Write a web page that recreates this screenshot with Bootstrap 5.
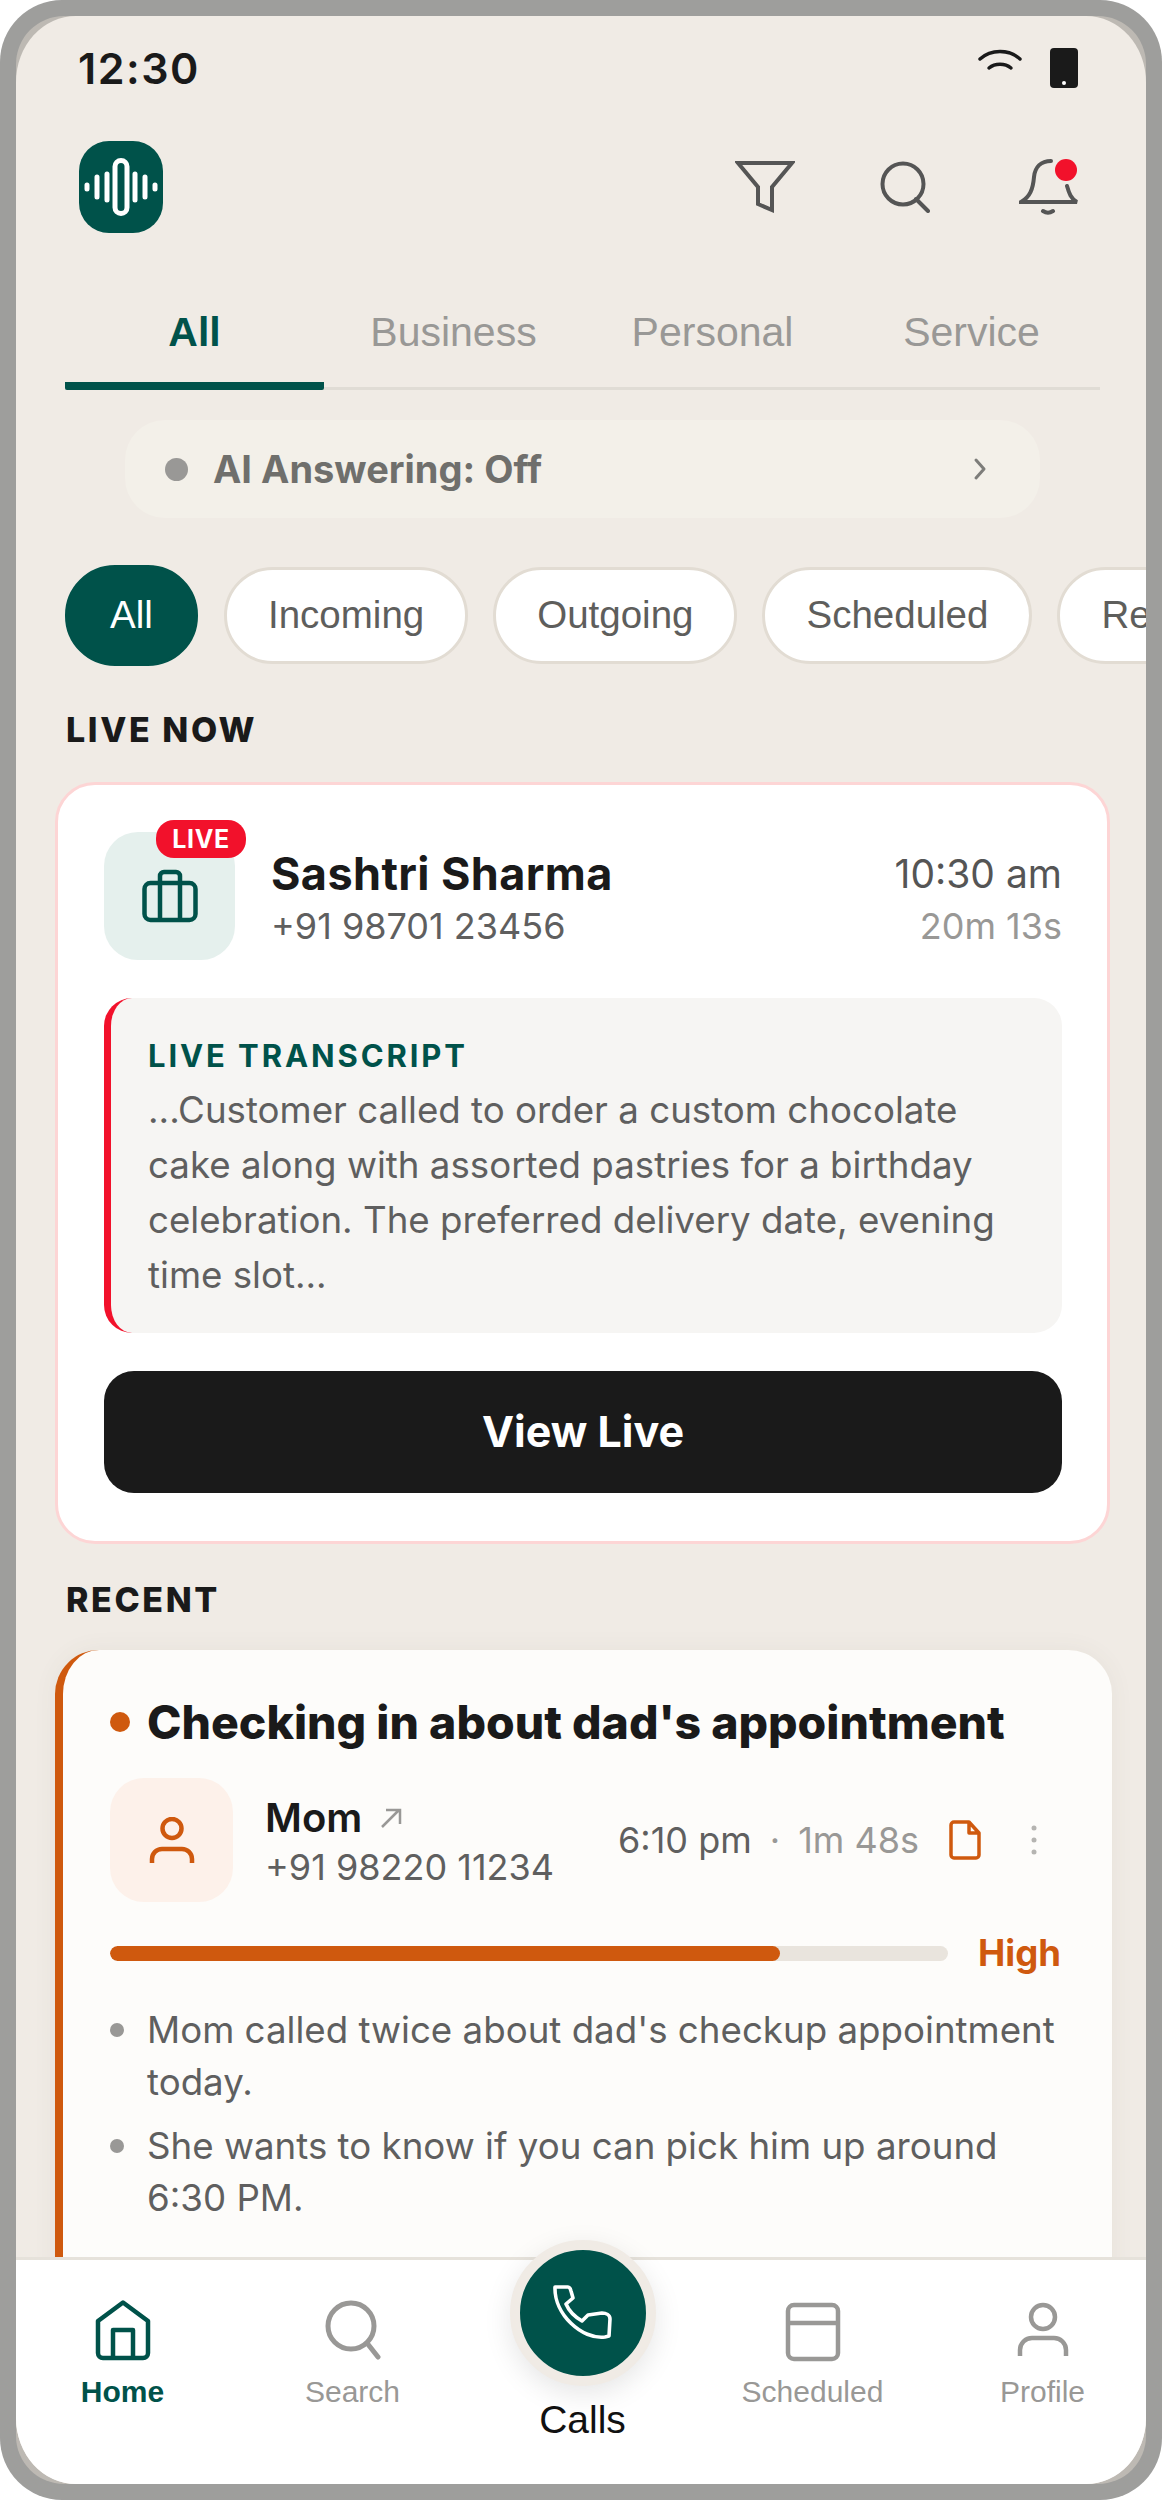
<!DOCTYPE html>
<html lang="en">
<head>
  <meta charset="UTF-8">
  <title>Calls Home</title>
  <meta name="viewport" content="width=device-width, initial-scale=1" />
  <link href="https://cdn.jsdelivr.net/npm/bootstrap@5.3.3/dist/css/bootstrap.min.css" rel="stylesheet">
  <style>
    body { margin: 0; background: #fff; font-family: Inter, sans-serif; color: #1a1a1a; }
    svg { display: block; }

    .phone-frame { width: 1162px; height: 2500px; padding: 16px; background: #9e9e9c; border-radius: 62px; }
    .frame-edge { height: 100%; background: #bdb9b3; border-radius: 48px; }
    .screen { height: 100%; background: #f0ebe5; border-radius: 60px / 66px; overflow: hidden; display: flex; flex-direction: column; }
    .screen-body { flex: 1 1 0; min-height: 0; overflow: hidden; }

    .status-row { height: 125px; padding: 32px 68px 0 62px; align-items: flex-start; }
    .status-time { font-size: 43px; font-weight: 600; line-height: 40px; letter-spacing: 1.5px; }
    .status-icons { gap: 28px; }

    .top-row { padding: 0 67px 0 63px; height: 92px; }
    .app-logo { width: 84px; height: 92px; background: #00524a; border-radius: 30px; }
    .top-search { margin-left: 85px; }
    .top-bell { margin-left: 89px; }

    .tab-row { margin: 76px 46px 0 49px; border-bottom: 3px solid #e0dcd5; }
    .tab-item { flex: 0 0 259px; height: 73px; margin-bottom: -3px; text-align: center; color: #999896; font: 400 41px/46px "Liberation Sans", sans-serif; }
    .tab-item.active-tab { color: #00524a; font-weight: 700; border-bottom: 8px solid #00524a; border-radius: 2px; height: 81px; }

    .ai-pill { margin: 30px 106px 0 109px; height: 98px; padding: 0 53px 0 40px; background: #f3f0e9; border-radius: 40px; color: #6f6f6c; font-size: 38px; font-weight: 700; }
    .grey-dot { width: 23px; height: 23px; border-radius: 50%; background: #999896; margin-right: 25px; }

    .chip-row { margin: 47px 0 0 49px; gap: 25px; white-space: nowrap; }
    .chip-item { height: 97px; padding: 0 41px; background: #fff; border: 3px solid #e2dcd3; border-radius: 50px; color: #5e5e5c; font: 400 38.500px/1 "Liberation Sans", sans-serif; flex: none; }
    .chip-item.active-chip { height: 101px; width: 133px; margin-right: 1px; padding: 0; background: #00524a; border-color: #00524a; color: #fff; }

    .section-label { margin: 0; padding-left: 50px; font-size: 34px; font-weight: 800; letter-spacing: 2.600px; line-height: 40px; color: #1a1a1a; }
    .label-live { margin-top: 44px; }
    .label-recent { margin-top: 36px; }

    .live-box { margin: 32px 36px 0 39px; height: 762px; padding: 47px 45px 0 46px; border: 3px solid #fdd5d5; border-radius: 40px; background: #fff; }
    .tile-wrap { position: relative; flex: none; width: 131px; height: 128px; margin-right: 36px; }
    .icon-tile { width: 131px; height: 128px; border-radius: 34px; background: #e5f0ed; }
    .live-tag { position: absolute; left: 52px; top: -12px; width: 90px; height: 38px; border-radius: 18px; background: #f2112b; color: #fff; font-size: 25px; font-weight: 700; letter-spacing: .6px; padding: 0; line-height: 38px; }
    .live-name { font-size: 45px; font-weight: 700; line-height: 52px; letter-spacing: .4px; padding-top: 3px; }
    .live-phone { font-size: 36px; line-height: 44px; margin-top: 4px; color: #5f5f5f; }
    .live-time { font-size: 39px; line-height: 52px; color: #555; padding-top: 3px; }
    .live-dur { font-size: 36px; line-height: 44px; margin-top: 4px; color: #999896; }

    .transcript-box { margin-top: 38px; height: 335px; padding: 38px 40px 0 37px; background: #f6f5f3; border-left: 7px solid #f2112b; border-radius: 28px; }
    .transcript-title { font-size: 31px; line-height: 40px; font-weight: 700; letter-spacing: 2.900px; color: #00524a; }
    .transcript-text { margin: 6px 0 0; font-size: 36.700px; line-height: 55px; color: #5f5f5f; }
    .view-btn { width: 100%; height: 122px; margin-top: 38px; padding-top: 4px; background: #1a1a1a; color: #fff; border: 0; border-radius: 30px; font-size: 43px; font-weight: 700; }

    .recent-box { margin: 30px 34px 0 39px; height: 800px; padding: 42px 51px 0 47px; background: #fdfcfa; border: 0; border-left: 8px solid #cf590e; border-radius: 44px 44px 0 0; box-shadow: 0 0 24px rgba(90,80,60,.06); }
    .recent-title { font-size: 46.400px; line-height: 60px; font-weight: 800; margin: 0; white-space: nowrap; }
    .orange-dot { flex: none; width: 20px; height: 20px; border-radius: 50%; background: #cf590e; margin-right: 17px; }
    .caller-row { margin-top: 26px; }
    .mom-tile { flex: none; width: 123px; height: 124px; margin-right: 32px; border-radius: 34px; background: #fdf1ea; }
    .mom-name { font-size: 40px; line-height: 48px; font-weight: 600; padding-top: 3px; }
    .mom-arrow { margin-left: 18px; }
    .mom-phone { font-size: 36px; line-height: 44px; margin-top: 3px; color: #5f5f5f; }
    .call-meta { margin-left: auto; margin-right: 24px; font-size: 36px; color: #999896; }
    .call-clock { color: #5f5f5f; }
    .meta-sep { margin: 0 18px; }
    .meta-doc { margin-left: 30px; }
    .meta-more { margin-left: 50px; }

    .priority-row { margin-top: 29px; }
    .priority-track { flex: 1 1 auto; height: 15px; background: #e9e4dd; border-radius: 8px; }
    .priority-track .progress-bar { background: #cf590e; border-radius: 8px; }
    .priority-text { margin-left: 30px; font-size: 36.500px; line-height: 44px; font-weight: 700; color: #cf590e; }

    .note-list { margin: 29px 0 0; padding: 0; list-style: none; font-size: 36.700px; line-height: 52px; color: #5f5f5f; }
    .note-list li { position: relative; padding-left: 37px; margin-bottom: 12px; }
    .note-list li::before { content: ""; position: absolute; left: 0; top: 19px; width: 14px; height: 14px; border-radius: 50%; background: #999896; }

    .bottom-nav { position: relative; flex: none; height: 227px; padding-left: 3px; background: #fff; border-top: 3px solid #e6e2db; display: grid; grid-template-columns: repeat(5, 230px); justify-content: center; }
    .nav-cell { padding-top: 40px; display: flex; flex-direction: column; align-items: center; color: #999896; font: 400 30px/36px "Liberation Sans", sans-serif; }
    .nav-cell svg { height: 62px; margin-bottom: 12px; }
    .nav-cell.home-cell { color: #00524a; font-weight: 700; }
    .nav-cell.calls-cell { padding-top: 138px; color: #111; font-size: 39px; line-height: 44px; }
    .calls-btn { position: absolute; left: 494px; top: -20px; width: 146px; height: 146px; padding: 0; border-radius: 50%; background: #00524a; border: 10px solid #f0ebe5; box-shadow: 0 8px 28px rgba(0,0,0,.1); }
  </style>
</head>
<body>
  <div class="phone-frame">
    <div class="frame-edge">
      <div class="screen">
        <div class="screen-body">

          <div class="status-row d-flex justify-content-between">
            <div class="status-time">12:30</div>
            <div class="status-icons d-flex">
              <svg width="44" height="24" viewBox="0 0 44 24" fill="none" stroke="#1a1a1a" stroke-width="3.500" stroke-linecap="round"><path d="M2 11C13 1 31 1 42 11"/><path d="M11 20c6-5 16-5 22 0"/></svg>
              <svg width="28" height="40" viewBox="0 0 28 40"><rect width="28" height="40" rx="4" fill="#1a1a1a"/><circle cx="14" cy="35" r="2" fill="#fff"/></svg>
            </div>
          </div>

          <div class="top-row d-flex justify-content-between align-items-center">
            <div class="app-logo d-flex align-items-center justify-content-center">
              <svg width="76" height="58" viewBox="0 0 76 58" fill="none" stroke="#fff" stroke-linecap="round">
                <path stroke-width="5" d="M4 27v4M14 19v20M24 16v26M52 16v26M62 19v20M72 27v4"/>
                <rect x="32" y="2.500" width="12" height="53" rx="6" stroke-width="5"/>
              </svg>
            </div>
            <div class="d-flex align-items-center">
              <svg width="60" height="52" viewBox="0 0 60 52" fill="none" stroke="#555" stroke-width="4"><path d="M3 2h54L37 26v23l-14-6V26z"/></svg>
              <svg class="top-search" width="50" height="52" viewBox="0 0 50 52" fill="none" stroke="#555" stroke-width="4" stroke-linecap="round"><circle cx="23" cy="23" r="20.500"/><path d="M36 38l12 12"/></svg>
              <svg class="top-bell" width="60" height="58" viewBox="0 0 60 58" fill="none"><path stroke="#555" stroke-width="4" stroke-linecap="round" d="M32 3C22 3 16 9 15 19c-1 12-4 20-13 25h56c-6-3-8-9-10-16M24 53c3 2 7 2 10 0"/><circle cx="47" cy="12" r="11" fill="#f2112b"/></svg>
            </div>
          </div>

          <nav class="tab-row d-flex">
            <div class="tab-item active-tab">All</div>
            <div class="tab-item">Business</div>
            <div class="tab-item">Personal</div>
            <div class="tab-item">Service</div>
          </nav>

          <div class="ai-pill d-flex align-items-center">
            <span class="grey-dot"></span>
            <span>AI Answering: Off</span>
            <svg class="ms-auto" width="14" height="24" viewBox="0 0 14 24" fill="none" stroke="#7d7d7a" stroke-width="3" stroke-linecap="round" stroke-linejoin="round"><path d="M3 3l8 9-8 9"/></svg>
          </div>

          <div class="chip-row d-flex align-items-center">
            <button class="btn chip-item active-chip">All</button>
            <button class="btn chip-item">Incoming</button>
            <button class="btn chip-item">Outgoing</button>
            <button class="btn chip-item">Scheduled</button>
            <button class="btn chip-item">Recent</button>
          </div>

          <h6 class="section-label label-live">LIVE NOW</h6>
          <div class="card live-box">
            <div class="d-flex align-items-center">
              <div class="tile-wrap">
                <div class="icon-tile d-flex align-items-center justify-content-center">
                  <svg width="56" height="54" viewBox="0 0 56 54" fill="none" stroke="#00524a" stroke-width="4.500" stroke-linejoin="round"><rect x="2.500" y="14" width="51" height="37" rx="6"/><path d="M18 14V7a4 4 0 0 1 4-4h12a4 4 0 0 1 4 4v7M18 14v37M38 14v37"/></svg>
                </div>
                <span class="badge live-tag">LIVE</span>
              </div>
              <div>
                <div class="live-name">Sashtri Sharma</div>
                <div class="live-phone">+91 98701 23456</div>
              </div>
              <div class="ms-auto text-end">
                <div class="live-time">10:30 am</div>
                <div class="live-dur">20m 13s</div>
              </div>
            </div>
            <div class="transcript-box">
              <div class="transcript-title">LIVE TRANSCRIPT</div>
              <p class="transcript-text">...Customer called to order a custom chocolate cake along with assorted pastries for a birthday celebration. The preferred delivery date, evening time slot...</p>
            </div>
            <button class="btn view-btn">View Live</button>
          </div>

          <h6 class="section-label label-recent">RECENT</h6>
          <div class="card recent-box">
            <div class="d-flex align-items-center">
              <span class="orange-dot"></span>
              <h5 class="recent-title">Checking in about dad's appointment</h5>
            </div>
            <div class="caller-row d-flex align-items-center">
              <div class="mom-tile d-flex align-items-center justify-content-center">
                <svg width="46" height="46" viewBox="0 0 46 46" fill="none" stroke="#cf590e" stroke-width="4.500"><circle cx="23" cy="11.500" r="9.500"/><path d="M3 46v-4a10 10 0 0 1 10-10h20a10 10 0 0 1 10 10v4"/></svg>
              </div>
              <div>
                <div class="mom-name d-flex align-items-center">Mom
                  <svg class="mom-arrow" width="22" height="22" viewBox="0 0 22 22" fill="none" stroke="#999896" stroke-width="2.500"><path d="M2 20L19 3M6 3h14v14"/></svg>
                </div>
                <div class="mom-phone">+91 98220 11234</div>
              </div>
              <div class="call-meta d-flex align-items-center">
                <span class="call-clock">6:10 pm</span><span class="meta-sep">·</span><span>1m 48s</span>
                <svg class="meta-doc" width="32" height="40" viewBox="0 0 32 40" fill="none" stroke="#cf590e" stroke-width="3.500" stroke-linejoin="round"><path d="M2 5a3 3 0 0 1 3-3h15l10 11v22a3 3 0 0 1-3 3H5a3 3 0 0 1-3-3zM20 2v11h10"/></svg>
                <svg class="meta-more" width="6" height="30" viewBox="0 0 6 30" fill="#b5b4b1"><circle cx="3" cy="3" r="2.500"/><circle cx="3" cy="15" r="2.500"/><circle cx="3" cy="27" r="2.500"/></svg>
              </div>
            </div>
            <div class="priority-row d-flex align-items-center">
              <div class="progress priority-track"><div class="progress-bar" style="width:80%"></div></div>
              <span class="priority-text">High</span>
            </div>
            <ul class="note-list">
              <li>Mom called twice about dad's checkup appointment today.</li>
              <li>She wants to know if you can pick him up around 6:30 PM.</li>
            </ul>
          </div>
        </div>

        <div class="bottom-nav">
          <div class="nav-cell home-cell">
            <svg width="56" height="62" viewBox="0 0 56 62" fill="none" stroke="#00524a" stroke-width="4.500" stroke-linejoin="round"><path d="M28 2.500L3 21v32a5 5 0 0 0 5 5h40a5 5 0 0 0 5-5V21z"/><path d="M18 58V30h20v28"/></svg>
            Home
          </div>
          <div class="nav-cell">
            <svg width="56" height="62" viewBox="0 0 56 62" fill="none" stroke="#999896" stroke-width="5" stroke-linecap="round"><circle cx="26" cy="26" r="23"/><path d="M42 43l11 14"/></svg>
            Search
          </div>
          <div class="nav-cell calls-cell">Calls</div>
          <div class="nav-cell">
            <svg width="56" height="62" viewBox="0 0 56 62" fill="none" stroke="#999896" stroke-width="4.500"><rect x="3" y="5" width="50" height="54" rx="6"/><path d="M3 23h50"/></svg>
            Scheduled
          </div>
          <div class="nav-cell">
            <svg width="52" height="62" viewBox="0 0 52 62" fill="none" stroke="#999896" stroke-width="4.500"><circle cx="26" cy="17" r="12"/><path d="M3 56v-6a12 12 0 0 1 12-12h22a12 12 0 0 1 12 12v6"/></svg>
            Profile
          </div>
          <button class="btn calls-btn d-flex align-items-center justify-content-center" aria-label="Calls">
            <svg width="62" height="58" viewBox="0 0 62 58" fill="none" stroke="#fff" stroke-width="3.600" stroke-linejoin="round"><path d="M3 3h13c2 0 2.500 2 3 4l2 7-7 6c3 7 9 13 16 17l6-6 14-2c4 0 8 2 8 6l-1 17-4 1C30 56 2 30 3 3z"/></svg>
          </button>
        </div>
      </div>
    </div>
  </div>
  <script src="https://cdn.jsdelivr.net/npm/bootstrap@5.3.3/dist/js/bootstrap.bundle.min.js"></script>
</body>
</html>
